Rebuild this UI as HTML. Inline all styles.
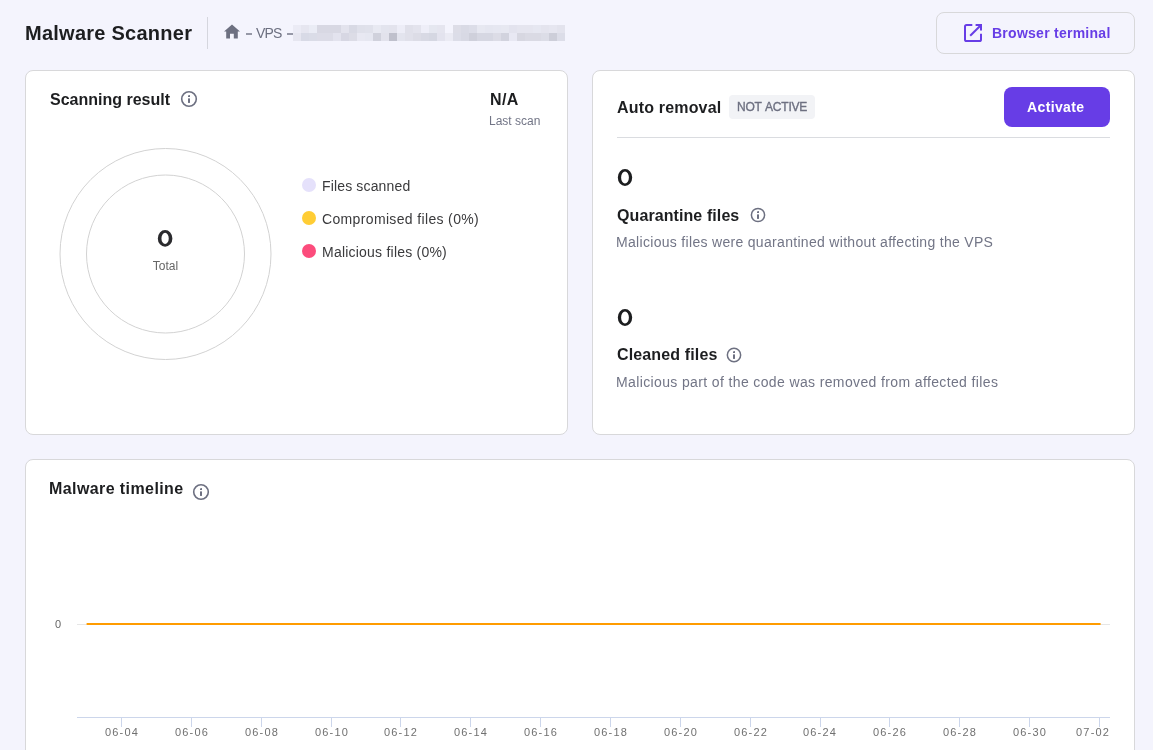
<!DOCTYPE html>
<html><head><meta charset="utf-8">
<style>
*{box-sizing:border-box;margin:0;padding:0}
html,body{width:1153px;height:750px;overflow:hidden;background:#f4f4fd;font-family:"Liberation Sans",sans-serif;color:#1d1e20}
.abs{position:absolute}
.t{position:absolute;white-space:nowrap;line-height:1;will-change:transform}
.card{position:absolute;background:#fff;border:1px solid #d8d8da;border-radius:8px}
.b{font-weight:bold}
</style></head><body>

<!-- header -->
<div class="t b" style="left:25px;top:23px;font-size:20px;letter-spacing:0.25px;color:#1d1e20">Malware Scanner</div>
<div class="abs" style="left:207px;top:17px;width:1px;height:32px;background:#d5d6de"></div>
<svg class="abs" style="left:224px;top:24px" width="16" height="15" viewBox="0 0 16 15"><path d="M8 0.5 L16 7.6 H13.8 V14.6 H9.8 V9.8 H6 V14.6 H2.2 V7.6 H0 Z" fill="#6d7081"/></svg>
<div class="abs" style="left:246px;top:33.4px;width:6px;height:1.5px;background:#6d7081;opacity:.7"></div><div class="t" style="left:256px;top:26px;font-size:14px;letter-spacing:-0.8px;color:#6d7081">VPS</div><div class="abs" style="left:287px;top:33.4px;width:5.6px;height:1.5px;background:#6d7081;opacity:.7"></div>
<!--blob--><svg class="abs" style="left:293px;top:25px" width="272" height="16" shape-rendering="crispEdges"><rect x="0" y="0" width="8" height="8" fill="#ebebf5"/><rect x="8" y="0" width="8" height="8" fill="#e6e6f0"/><rect x="16" y="0" width="8" height="8" fill="#eaecf5"/><rect x="24" y="0" width="8" height="8" fill="#d8d8e3"/><rect x="32" y="0" width="8" height="8" fill="#d8d8e3"/><rect x="40" y="0" width="8" height="8" fill="#d8d8e3"/><rect x="48" y="0" width="8" height="8" fill="#e3e3ed"/><rect x="56" y="0" width="8" height="8" fill="#d8d9e4"/><rect x="64" y="0" width="8" height="8" fill="#dfe0ea"/><rect x="72" y="0" width="8" height="8" fill="#e0e1eb"/><rect x="80" y="0" width="8" height="8" fill="#e8e9f2"/><rect x="88" y="0" width="8" height="8" fill="#e3e4ee"/><rect x="96" y="0" width="8" height="8" fill="#e3e3ed"/><rect x="104" y="0" width="8" height="8" fill="#ededf7"/><rect x="112" y="0" width="8" height="8" fill="#e0e0ea"/><rect x="120" y="0" width="8" height="8" fill="#e3e3ed"/><rect x="128" y="0" width="8" height="8" fill="#eeeef8"/><rect x="136" y="0" width="8" height="8" fill="#e5e7f0"/><rect x="144" y="0" width="8" height="8" fill="#e5e5ef"/><rect x="152" y="0" width="8" height="8" fill="#f4f4fd"/><rect x="160" y="0" width="8" height="8" fill="#dddde7"/><rect x="168" y="0" width="8" height="8" fill="#d9dae5"/><rect x="176" y="0" width="8" height="8" fill="#dcdde8"/><rect x="184" y="0" width="8" height="8" fill="#e7e8f1"/><rect x="192" y="0" width="8" height="8" fill="#e5e6f0"/><rect x="200" y="0" width="8" height="8" fill="#e6e7f1"/><rect x="208" y="0" width="8" height="8" fill="#e7e8f1"/><rect x="216" y="0" width="8" height="8" fill="#e3e3ee"/><rect x="224" y="0" width="8" height="8" fill="#e5e5ef"/><rect x="232" y="0" width="8" height="8" fill="#e5e5ef"/><rect x="240" y="0" width="8" height="8" fill="#e6e7f1"/><rect x="248" y="0" width="8" height="8" fill="#e4e4ee"/><rect x="256" y="0" width="8" height="8" fill="#e6e6f0"/><rect x="264" y="0" width="8" height="8" fill="#e3e3ed"/><rect x="0" y="8" width="8" height="8" fill="#e6e6f0"/><rect x="8" y="8" width="8" height="8" fill="#d8dae6"/><rect x="16" y="8" width="8" height="8" fill="#dadce7"/><rect x="24" y="8" width="8" height="8" fill="#dcdce7"/><rect x="32" y="8" width="8" height="8" fill="#dcdce7"/><rect x="40" y="8" width="8" height="8" fill="#e3e3ee"/><rect x="48" y="8" width="8" height="8" fill="#d7d7e3"/><rect x="56" y="8" width="8" height="8" fill="#dcdce6"/><rect x="64" y="8" width="8" height="8" fill="#e8e8f2"/><rect x="72" y="8" width="8" height="8" fill="#e6e7f1"/><rect x="80" y="8" width="8" height="8" fill="#d0d1dc"/><rect x="88" y="8" width="8" height="8" fill="#e2e2ec"/><rect x="96" y="8" width="8" height="8" fill="#bfc0cc"/><rect x="104" y="8" width="8" height="8" fill="#e3e4ee"/><rect x="112" y="8" width="8" height="8" fill="#e0e0ea"/><rect x="120" y="8" width="8" height="8" fill="#dcdce6"/><rect x="128" y="8" width="8" height="8" fill="#d8d9e4"/><rect x="136" y="8" width="8" height="8" fill="#d5d7e2"/><rect x="144" y="8" width="8" height="8" fill="#e3e3ee"/><rect x="152" y="8" width="8" height="8" fill="#ebebf4"/><rect x="160" y="8" width="8" height="8" fill="#dcdde8"/><rect x="168" y="8" width="8" height="8" fill="#d8d9e4"/><rect x="176" y="8" width="8" height="8" fill="#cfd0db"/><rect x="184" y="8" width="8" height="8" fill="#d6d7e2"/><rect x="192" y="8" width="8" height="8" fill="#d6d7e2"/><rect x="200" y="8" width="8" height="8" fill="#dcdce6"/><rect x="208" y="8" width="8" height="8" fill="#d2d3de"/><rect x="216" y="8" width="8" height="8" fill="#e8e8f3"/><rect x="224" y="8" width="8" height="8" fill="#d7d7e1"/><rect x="232" y="8" width="8" height="8" fill="#dadae4"/><rect x="240" y="8" width="8" height="8" fill="#dadae4"/><rect x="248" y="8" width="8" height="8" fill="#dcdde7"/><rect x="256" y="8" width="8" height="8" fill="#cdced9"/><rect x="264" y="8" width="8" height="8" fill="#dcdde8"/></svg><!--/blob-->

<div class="abs" style="left:936px;top:12px;width:199px;height:42px;border:1px solid #d8d8da;border-radius:8px"></div>
<svg class="abs" style="left:964px;top:24px" width="18" height="18" viewBox="0 0 18 18" fill="none" stroke="#673de6" stroke-width="2"><path d="M8.3 1H2.6C1.7 1 1 1.7 1 2.6V15.4C1 16.3 1.7 17 2.6 17H15.4C16.3 17 17 16.3 17 15.4V9.7"/><path d="M11.6 1H17V6.4"/><path d="M16.3 1.7L6.2 11.8"/></svg>
<div class="t b" style="left:992px;top:26px;font-size:14px;letter-spacing:0.26px;color:#673de6">Browser terminal</div>

<!-- scanning card -->
<div class="card" style="left:25px;top:70px;width:543px;height:365px"></div>
<div class="t b" style="left:50px;top:92px;font-size:16px;color:#1d1e20">Scanning result</div>
<svg class="abs" style="left:179.0px;top:88.8px" width="20" height="20" viewBox="0 0 20 20"><circle cx="10" cy="10" r="7.30" fill="none" stroke="#6d7081" stroke-width="1.6"/><rect x="9" y="9.4" width="2" height="4.5" fill="#6d7081"/><path d="M9 6.6 L11 6.1 V7.9 H9 Z" fill="#6d7081"/></svg>
<div class="t b" style="left:490px;top:92px;font-size:16px;letter-spacing:0.4px;color:#1d1e20">N/A</div>
<div class="t" style="left:489px;top:115px;font-size:12px;color:#727586">Last scan</div>

<svg class="abs" style="left:0;top:0" width="580" height="440"><circle cx="165.5" cy="254" r="105.5" fill="none" stroke="#d2d2d2" stroke-width="1"/><circle cx="165.5" cy="254" r="79" fill="none" stroke="#d2d2d2" stroke-width="1"/></svg>
<svg class="abs" style="left:150px;top:224px" width="30" height="30"><path fill-rule="evenodd" fill="#2b2b2e" d="M7.80 14.40 a7.30 8.40 0 1 0 14.60 0 a7.30 8.40 0 1 0 -14.60 0 Z M11.45 14.40 a3.65 5.55 0 1 0 7.30 0 a3.65 5.55 0 1 0 -7.30 0 Z"/></svg>
<div class="t" style="left:145px;top:260px;width:41px;text-align:center;font-size:12px;color:#666">Total</div>

<div class="abs" style="left:302px;top:178px;width:14px;height:14px;border-radius:50%;background:#e5e1fb"></div>
<div class="abs" style="left:302px;top:211px;width:14px;height:14px;border-radius:50%;background:#ffcd35"></div>
<div class="abs" style="left:302px;top:244px;width:14px;height:14px;border-radius:50%;background:#fc4c7c"></div>
<div class="t" style="left:322px;top:179px;font-size:14px;letter-spacing:0.15px;color:#3a3a3c">Files scanned</div>
<div class="t" style="left:322px;top:212px;font-size:14px;letter-spacing:0.35px;color:#3a3a3c">Compromised files (0%)</div>
<div class="t" style="left:322px;top:245px;font-size:14px;letter-spacing:0.22px;color:#3a3a3c">Malicious files (0%)</div>

<!-- auto removal card -->
<div class="card" style="left:592px;top:70px;width:543px;height:365px"></div>
<div class="t b" style="left:617px;top:100px;font-size:16px;letter-spacing:0.18px;color:#1d1e20">Auto removal</div>
<div class="abs" style="left:729px;top:95px;width:86px;height:24px;border-radius:4px;background:#f2f3f6"></div>
<div class="t" style="left:737px;top:101px;font-size:12px;letter-spacing:-0.2px;word-spacing:1px;color:#6d7081;-webkit-text-stroke:0.35px #6d7081">NOT ACTIVE</div>
<div class="abs" style="left:1004px;top:87px;width:106px;height:40px;border-radius:8px;background:#673de6"></div>
<div class="t b" style="left:1027px;top:100px;font-size:14px;letter-spacing:0.37px;color:#fff">Activate</div>
<div class="abs" style="left:617px;top:137px;width:493px;height:1px;background:#dadce0"></div>

<svg class="abs" style="left:610px;top:162px" width="30" height="30"><path fill-rule="evenodd" fill="#1d1e20" d="M7.80 15.50 a7.20 8.50 0 1 0 14.40 0 a7.20 8.50 0 1 0 -14.40 0 Z M11.10 15.50 a3.90 5.90 0 1 0 7.80 0 a3.90 5.90 0 1 0 -7.80 0 Z"/></svg>
<div class="t b" style="left:617px;top:208px;font-size:16px;letter-spacing:0.09px;color:#1d1e20">Quarantine files</div>
<svg class="abs" style="left:747.9px;top:204.8px" width="20" height="20" viewBox="0 0 20 20"><circle cx="10" cy="10" r="6.60" fill="none" stroke="#6d7081" stroke-width="1.5"/><rect x="9" y="9.4" width="2" height="4.5" fill="#6d7081"/><path d="M9 6.6 L11 6.1 V7.9 H9 Z" fill="#6d7081"/></svg>
<div class="t" style="left:616px;top:235px;font-size:14px;letter-spacing:0.31px;color:#727586">Malicious files were quarantined without affecting the VPS</div>

<svg class="abs" style="left:610px;top:302px" width="30" height="30"><path fill-rule="evenodd" fill="#1d1e20" d="M7.80 15.50 a7.20 8.50 0 1 0 14.40 0 a7.20 8.50 0 1 0 -14.40 0 Z M11.10 15.50 a3.90 5.90 0 1 0 7.80 0 a3.90 5.90 0 1 0 -7.80 0 Z"/></svg>
<div class="t b" style="left:617px;top:347px;font-size:16px;letter-spacing:0.14px;color:#1d1e20">Cleaned files</div>
<svg class="abs" style="left:723.9px;top:344.8px" width="20" height="20" viewBox="0 0 20 20"><circle cx="10" cy="10" r="6.65" fill="none" stroke="#6d7081" stroke-width="1.5"/><rect x="9" y="9.4" width="2" height="4.5" fill="#6d7081"/><path d="M9 6.6 L11 6.1 V7.9 H9 Z" fill="#6d7081"/></svg>
<div class="t" style="left:616px;top:375px;font-size:14px;letter-spacing:0.37px;color:#727586">Malicious part of the code was removed from affected files</div>

<!-- timeline card -->
<div class="card" style="left:25px;top:459px;width:1110px;height:340px"></div>
<div class="t b" style="left:49px;top:481px;font-size:16px;letter-spacing:0.41px;color:#1d1e20">Malware timeline</div>
<svg class="abs" style="left:190.9px;top:481.8px" width="20" height="20" viewBox="0 0 20 20"><circle cx="10" cy="10" r="7.30" fill="none" stroke="#6d7081" stroke-width="1.6"/><rect x="9" y="9.4" width="2" height="4.5" fill="#6d7081"/><path d="M9 6.6 L11 6.1 V7.9 H9 Z" fill="#6d7081"/></svg>
<!--chart--><svg class="abs" style="left:0;top:0" width="1153" height="750"><rect x="77" y="624" width="1033" height="1" fill="#e6e6e6"/><rect x="86.6" y="623" width="1014" height="2" fill="#ff9c00"/><rect x="77" y="717" width="1033" height="1" fill="#ccd6eb"/><rect x="121" y="717" width="1" height="10" fill="#ccd6eb"/><rect x="191" y="717" width="1" height="10" fill="#ccd6eb"/><rect x="261" y="717" width="1" height="10" fill="#ccd6eb"/><rect x="331" y="717" width="1" height="10" fill="#ccd6eb"/><rect x="400" y="717" width="1" height="10" fill="#ccd6eb"/><rect x="470" y="717" width="1" height="10" fill="#ccd6eb"/><rect x="540" y="717" width="1" height="10" fill="#ccd6eb"/><rect x="610" y="717" width="1" height="10" fill="#ccd6eb"/><rect x="680" y="717" width="1" height="10" fill="#ccd6eb"/><rect x="750" y="717" width="1" height="10" fill="#ccd6eb"/><rect x="820" y="717" width="1" height="10" fill="#ccd6eb"/><rect x="889" y="717" width="1" height="10" fill="#ccd6eb"/><rect x="959" y="717" width="1" height="10" fill="#ccd6eb"/><rect x="1029" y="717" width="1" height="10" fill="#ccd6eb"/><rect x="1099" y="717" width="1" height="10" fill="#ccd6eb"/></svg><div class="t" style="left:92.1px;top:727px;width:60px;text-align:center;font-size:11px;letter-spacing:1.2px;color:#707070">06-04</div><div class="t" style="left:161.9px;top:727px;width:60px;text-align:center;font-size:11px;letter-spacing:1.2px;color:#707070">06-06</div><div class="t" style="left:231.7px;top:727px;width:60px;text-align:center;font-size:11px;letter-spacing:1.2px;color:#707070">06-08</div><div class="t" style="left:301.6px;top:727px;width:60px;text-align:center;font-size:11px;letter-spacing:1.2px;color:#707070">06-10</div><div class="t" style="left:371.4px;top:727px;width:60px;text-align:center;font-size:11px;letter-spacing:1.2px;color:#707070">06-12</div><div class="t" style="left:441.2px;top:727px;width:60px;text-align:center;font-size:11px;letter-spacing:1.2px;color:#707070">06-14</div><div class="t" style="left:511.0px;top:727px;width:60px;text-align:center;font-size:11px;letter-spacing:1.2px;color:#707070">06-16</div><div class="t" style="left:580.8px;top:727px;width:60px;text-align:center;font-size:11px;letter-spacing:1.2px;color:#707070">06-18</div><div class="t" style="left:650.7px;top:727px;width:60px;text-align:center;font-size:11px;letter-spacing:1.2px;color:#707070">06-20</div><div class="t" style="left:720.5px;top:727px;width:60px;text-align:center;font-size:11px;letter-spacing:1.2px;color:#707070">06-22</div><div class="t" style="left:790.3px;top:727px;width:60px;text-align:center;font-size:11px;letter-spacing:1.2px;color:#707070">06-24</div><div class="t" style="left:860.1px;top:727px;width:60px;text-align:center;font-size:11px;letter-spacing:1.2px;color:#707070">06-26</div><div class="t" style="left:929.9px;top:727px;width:60px;text-align:center;font-size:11px;letter-spacing:1.2px;color:#707070">06-28</div><div class="t" style="left:999.8px;top:727px;width:60px;text-align:center;font-size:11px;letter-spacing:1.2px;color:#707070">06-30</div><div class="t" style="left:1076px;top:727px;font-size:11px;letter-spacing:1.2px;color:#707070">07-02</div><div class="t" style="left:55px;top:619px;font-size:11px;color:#666">0</div><!--/chart-->
</body></html>
